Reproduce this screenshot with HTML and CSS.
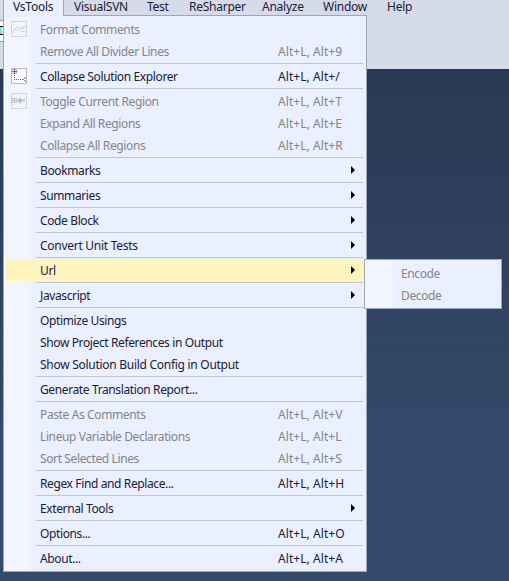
FILE: index.html
```html
<!DOCTYPE html>
<html lang="en">
<head>
<meta charset="utf-8">
<title>VsTools menu</title>
<link rel="stylesheet" href="styles.css">
</head>
<body>
<div class="window">
  <header class="toolbar">
    <nav class="menubar">
      <span class="tab open">VsTools</span>
      <span class="tab visualsvn">VisualSVN</span>
      <span class="tab test">Test</span>
      <span class="tab resharper">ReSharper</span>
      <span class="tab analyze">Analyze</span>
      <span class="tab win">Window</span>
      <span class="tab help">Help</span>
    </nav>
    <div class="field"></div>
  </header>
  <div class="menu main-menu">
    <div class="item off"><svg class="icon" width="16" height="16" viewBox="0 0 16 16"><path d="M.5.5h15v15H.5z" fill="#f2f4fb" stroke="#d2d4dc"/><path d="M2 10.5l5-5M6 10.5l5-5" fill="none" stroke="#b9bcc4"/><path d="M10 10.5h1m1 0h1m1 0h1M11 8.5l3-3" fill="none" stroke="#b9bcc4"/></svg><span>Format Comments</span></div>
    <div class="item off"><span>Remove All Divider Lines</span><kbd>Alt+L, Alt+9</kbd></div>
    <hr>
    <div class="item"><svg class="icon" width="16" height="16" viewBox="0 0 16 16"><path d="M.5.5h15v15H.5z" fill="#fbfbfc" stroke="#b9bac5"/><path d="M.5 1.5h5v4h-5z" fill="#fff" stroke="#b5b5bc"/><path d="M1 3.5h5M3.5 1v5" stroke="#666"/><path d="M3.5 7v4" stroke="#777" stroke-dasharray="1 1"/><path d="M3 11.5h9" stroke="#666" stroke-dasharray="1 1"/><path d="M15 9l-2.5 2.5L15 14" fill="none" stroke="#777"/></svg><span>Collapse Solution Explorer</span><kbd>Alt+L, Alt+/</kbd></div>
    <hr>
    <div class="item off"><svg class="icon" width="16" height="16" viewBox="0 0 16 16"><path d="M.5.5h15v15H.5z" fill="#f2f4fb" stroke="#d2d4dc"/><path d="M1.5 5.5h4v4h-4zM1 7.5h5M3.5 5v5" fill="none" stroke="#c2c4ca"/><path d="M6 7.5L10 4v2.5h4v2h-4V11z" fill="#b9bbc2"/></svg><span>Toggle Current Region</span><kbd>Alt+L, Alt+T</kbd></div>
    <div class="item off"><span>Expand All Regions</span><kbd>Alt+L, Alt+E</kbd></div>
    <div class="item off"><span>Collapse All Regions</span><kbd>Alt+L, Alt+R</kbd></div>
    <hr>
    <div class="item"><span>Bookmarks</span><i class="arrow"></i></div>
    <hr>
    <div class="item"><span>Summaries</span><i class="arrow"></i></div>
    <hr>
    <div class="item"><span>Code Block</span><i class="arrow"></i></div>
    <hr>
    <div class="item"><span class="loose">Convert Unit Tests</span><i class="arrow"></i></div>
    <hr>
    <div class="item selected"><span>Url</span><i class="arrow"></i>
      <div class="menu submenu">
        <div class="item off"><span>Encode</span></div>
        <div class="item off"><span>Decode</span></div>
      </div>
    </div>
    <hr>
    <div class="item"><span>Javascript</span><i class="arrow"></i></div>
    <hr>
    <div class="item"><span>Optimize Usings</span></div>
    <div class="item"><span>Show Project References in Output</span></div>
    <div class="item"><span class="loose">Show Solution Build Config in Output</span></div>
    <hr>
    <div class="item"><span>Generate Translation Report...</span></div>
    <hr>
    <div class="item off"><span>Paste As Comments</span><kbd>Alt+L, Alt+V</kbd></div>
    <div class="item off"><span>Lineup Variable Declarations</span><kbd>Alt+L, Alt+L</kbd></div>
    <div class="item off"><span>Sort Selected Lines</span><kbd>Alt+L, Alt+S</kbd></div>
    <hr>
    <div class="item"><span>Regex Find and Replace...</span><kbd>Alt+L, Alt+H</kbd></div>
    <hr>
    <div class="item"><span>External Tools</span><i class="arrow"></i></div>
    <hr>
    <div class="item"><span>Options...</span><kbd>Alt+L, Alt+O</kbd></div>
    <hr>
    <div class="item"><span>About...</span><kbd>Alt+L, Alt+A</kbd></div>
  </div>
</div>
</body>
</html>
```
FILE: styles.css
```css
* { box-sizing: border-box; }
body {
  margin: 0;
  font: 12px/22px "Noto Sans", "Open Sans", sans-serif;
  letter-spacing: -0.25px;
  color: #1b2036;
}
.window {
  position: relative;
  width: 509px;
  height: 581px;
  overflow: hidden;
  background: linear-gradient(#293955 69px, #35496a 450px);
}
.toolbar { height: 69px; background: #d6dbe9; }
.menubar { position: relative; z-index: 2; display: flex; height: 15px; padding-left: 3px; }
.tab { height: 15px; line-height: 14px; white-space: nowrap; }
.open {
  width: 61px;
  padding-left: 9px;
  border: solid #9ba7b7;
  border-width: 0 1px;
  background: #eaf0ff;
}
.visualsvn { width: 73px; padding-left: 10px; }
.test { width: 42px; padding-left: 10px; }
.resharper { width: 73px; padding-left: 10px; }
.analyze { width: 61px; padding-left: 10px; }
.win { width: 64px; padding-left: 10px; }
.help { padding-left: 10px; }
.field {
  width: 10px;
  height: 22px;
  margin-top: 5px;
  border: 1px solid #8e9bbc;
  border-left: 0;
  background: linear-gradient(#000, #000) 0 5px / 3px 1px no-repeat,
    linear-gradient(#000, #000) 0 13px / 3px 1px no-repeat,
    linear-gradient(#7cdcff, #7cdcff) 0 6px / 2px 7px no-repeat, #fff;
}
.menu {
  position: absolute;
  padding: 2px;
  border: 1px solid #9ba7b7;
  background: linear-gradient(90deg, #f2f4fe 27px, #eaf0ff 27px);
}
.main-menu { left: 3px; top: 15px; width: 364px; height: 557px; letter-spacing: -0.38px; }
.main-menu::before {
  content: "";
  position: absolute;
  left: 0;
  top: -1px;
  width: 59px;
  height: 2px;
  background: #eaf0ff;
}
.item {
  position: relative;
  display: flex;
  align-items: center;
  height: 22px;
  padding-left: 34px;
  white-space: nowrap;
}
.item > span, .item > kbd { padding-top: 2px; }
.loose { letter-spacing: -0.28px; }
.icon { margin-left: -29px; margin-right: 13px; }
.off { color: #858588; }
.selected { background: #fff3be; }
.item kbd {
  width: 80px;
  margin-left: auto;
  margin-right: 6px;
  font: inherit;
  letter-spacing: 0.06px;
}
.arrow {
  margin-left: auto;
  margin-right: 9px;
  border: solid transparent;
  border-width: 4px 0 4px 4px;
  border-left-color: #000;
}
hr {
  height: 1px;
  margin: 1px 1px 1px 30px;
  border: 0;
  background: #bec3cf;
}
.submenu { left: 358px; top: 0; width: 138px; height: 50px; z-index: 1; }
```
